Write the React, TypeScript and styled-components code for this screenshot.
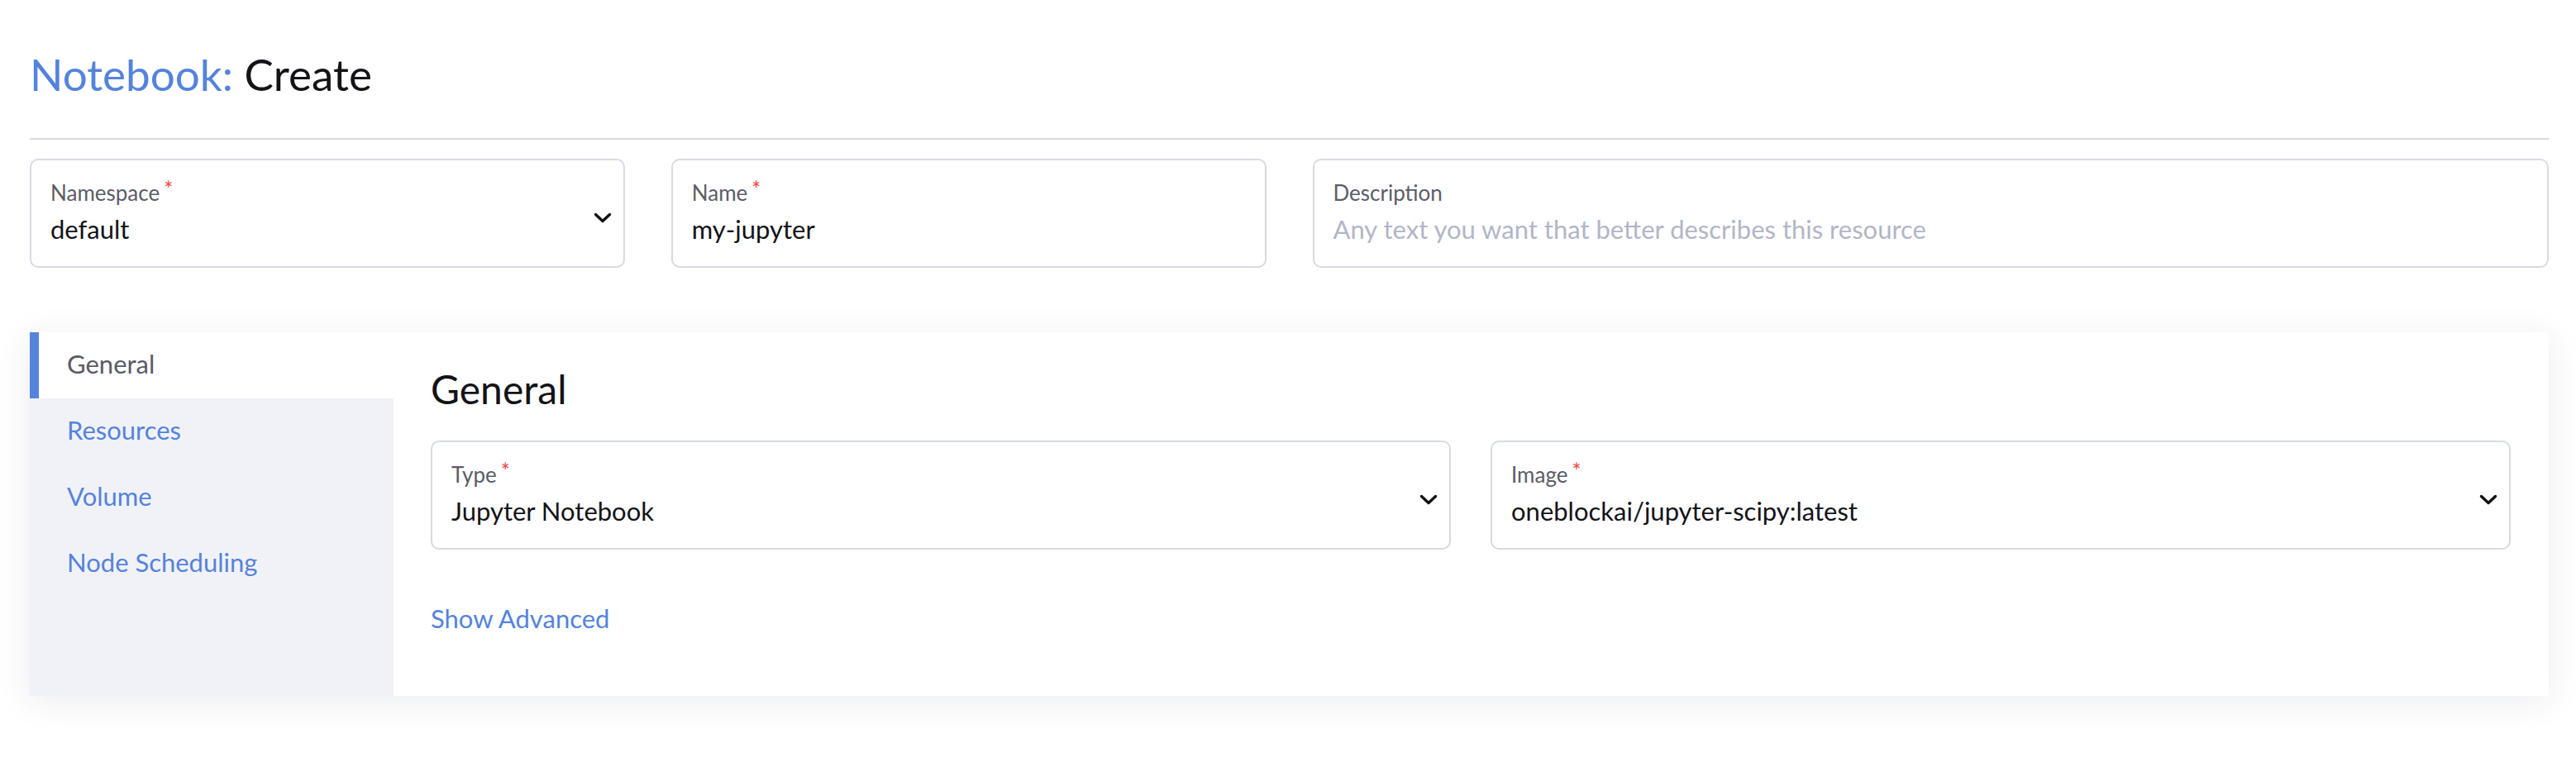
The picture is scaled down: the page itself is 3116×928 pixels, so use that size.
import styled, { createGlobalStyle } from 'styled-components';

const colors = {
  blue: '#5483dc',
  text: '#131318',
  label: '#5c5c67',
  placeholder: '#b2b5c8',
  border: '#d7dae3',
  red: '#ee4444',
  side: '#f1f2f7',
};

const GlobalStyle = createGlobalStyle`
  body {
    margin: 0;
    background: #ffffff;
    font-family: "Lato", "Open Sans", sans-serif;
    color: ${colors.text};
  }
`;

const Chevron = () => (
  <svg width="22" height="13" viewBox="0 0 22 13" fill="none">
    <path d="M2.5 2.5 L11 10.5 L19.5 2.5" stroke="#111" strokeWidth="3.4" strokeLinecap="round" strokeLinejoin="round" />
  </svg>
);

type FieldProps = {
  label: string;
  value?: string;
  placeholder?: string;
  required?: boolean;
  select?: boolean;
};

function Field({ label, value, placeholder, required, select }: FieldProps) {
  return (
    <FieldBox>
      <div className="inner">
        <Label>
          {label}
          {required && <span className="req">*</span>}
        </Label>
        <Value $muted={!value}>{value || placeholder}</Value>
      </div>
      {select && (
        <div className="chev">
          <Chevron />
        </div>
      )}
    </FieldBox>
  );
}

const tabs = ['General', 'Resources', 'Volume', 'Node Scheduling'];

export default function App() {
  return (
    <Page>
      <GlobalStyle />
      <Title>
        <span className="kind">Notebook:</span> Create
      </Title>
      <Divider />
      <TopGrid>
        <Col $span={3}>
          <Field label="Namespace" value="default" required select />
        </Col>
        <Col $span={3}>
          <Field label="Name" value="my-jupyter" required />
        </Col>
        <Col $span={6}>
          <Field label="Description" placeholder="Any text you want that better describes this resource" />
        </Col>
      </TopGrid>

      <Panel>
        <SideNav>
          {tabs.map((t, i) => (
            <Tab key={t} $active={i === 0}>
              {t}
            </Tab>
          ))}
        </SideNav>
        <Content>
          <SectionTitle>General</SectionTitle>
          <TwoCols>
            <Field label="Type" value="Jupyter Notebook" required select />
            <Field label="Image" value="oneblockai/jupyter-scipy:latest" required select />
          </TwoCols>
          <Advanced>Show Advanced</Advanced>
        </Content>
      </Panel>
    </Page>
  );
}

const Page = styled.div`
  padding: 58px 33px 80px 36px;
  box-sizing: border-box;
`;

const Title = styled.h1`
  margin: 0;
  font-size: 53px;
  line-height: 64px;
  font-weight: 400;
  color: ${colors.text};

  .kind {
    color: ${colors.blue};
  }
`;

const Divider = styled.div`
  height: 2px;
  background: ${colors.border};
  margin-top: 45px;
`;

const TopGrid = styled.div`
  display: grid;
  grid-template-columns: repeat(12, 1fr);
  column-gap: 56px;
  margin-top: 23px;
`;

const Col = styled.div<{ $span: number }>`
  grid-column: span ${(p) => p.$span};
`;

const FieldBox = styled.div`
  display: flex;
  align-items: center;
  height: 132px;
  box-sizing: border-box;
  border: 2px solid ${colors.border};
  border-radius: 10px;
  padding: 0 14px 0 23px;
  background: #fff;

  .inner {
    flex: 1;
    display: flex;
    flex-direction: column;
    gap: 10px;
    margin-top: -4px;
  }

  .chev {
    display: flex;
    margin-top: 10px;
  }
`;

const Label = styled.div`
  font-size: 26px;
  line-height: 32px;
  color: ${colors.label};

  .req {
    color: ${colors.red};
    font-size: 26px;
    margin-left: 5px;
    vertical-align: top;
    line-height: 24px;
  }
`;

const Value = styled.div<{ $muted?: boolean }>`
  font-size: 31px;
  line-height: 36px;
  color: ${(p) => (p.$muted ? colors.placeholder : colors.text)};
`;

const Panel = styled.div`
  display: flex;
  margin-top: 78px;
  height: 440px;
  background: #fff;
  box-shadow: 0 6px 40px rgba(30, 40, 80, 0.09);
`;

const SideNav = styled.div`
  width: 440px;
  flex-shrink: 0;
  background: ${colors.side};
  display: flex;
  flex-direction: column;
`;

const Tab = styled.div<{ $active?: boolean }>`
  height: 80px;
  display: flex;
  align-items: center;
  box-sizing: border-box;
  padding-left: ${(p) => (p.$active ? '34px' : '45px')};
  padding-bottom: 4px;
  font-size: 31px;
  color: ${(p) => (p.$active ? '#5a5a65' : colors.blue)};
  background: ${(p) => (p.$active ? '#fff' : 'transparent')};
  border-left: ${(p) => (p.$active ? `11px solid ${colors.blue}` : 'none')};
`;

const Content = styled.div`
  flex: 1;
  padding: 40px 46px 0 45px;
`;

const SectionTitle = styled.h2`
  margin: 0 0 33px;
  font-size: 48px;
  line-height: 58px;
  font-weight: 400;
  color: ${colors.text};
`;

const TwoCols = styled.div`
  display: grid;
  grid-template-columns: 1fr 1fr;
  gap: 48px;
`;

const Advanced = styled.div`
  margin-top: 64px;
  font-size: 31px;
  line-height: 38px;
  color: ${colors.blue};
`;
